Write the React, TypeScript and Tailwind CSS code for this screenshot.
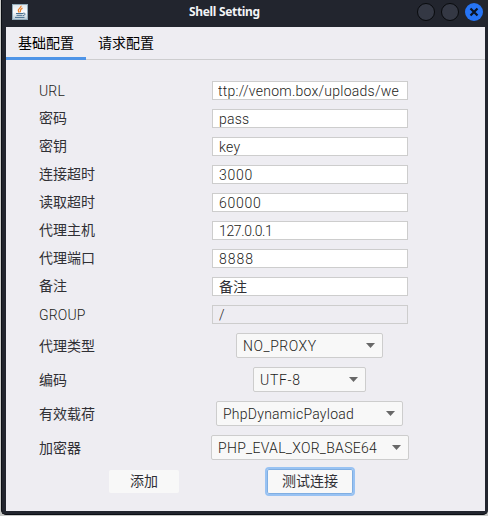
import React from "react";

const fields = [
  { label: "URL", value: "ttp://venom.box/uploads/we", text: "-ml-px -mr-1 tracking-[0.25px]" },
  { label: "密码", value: "pass", text: "tracking-[0.2px]" },
  { label: "密钥", value: "key", text: "tracking-[0.3px]" },
  { label: "连接超时", value: "3000", text: "tracking-[0.75px]" },
  { label: "读取超时", value: "60000", text: "tracking-[0.75px]" },
  { label: "代理主机", value: "127.0.0.1", text: "tracking-[-0.35px]" },
  { label: "代理端口", value: "8888", text: "tracking-[0.95px]" },
  { label: "备注", value: "备注", text: "" },
  { label: "GROUP", value: "/", text: "", disabled: true },
];

const selects = [
  { label: "代理类型", value: "NO_PROXY", box: "w-[147px]", text: "tracking-[0.55px]" },
  { label: "编码", value: "UTF-8", box: "w-[113px]", text: "tracking-[0.7px]" },
  { label: "有效载荷", value: "PhpDynamicPayload", box: "w-[187px]", text: "tracking-[0.25px]" },
  { label: "加密器", value: "PHP_EVAL_XOR_BASE64", box: "w-[198px]", text: "tracking-[0.3px]" },
];

function JavaIcon() {
  return (
    <svg width="16" height="16" viewBox="0 0 16 16" className="block">
      <defs>
        <linearGradient id="tile" x1="0" y1="0" x2="0" y2="1">
          <stop offset="0" stopColor="#dfe7ec" />
          <stop offset="0.5" stopColor="#fafcfd" />
          <stop offset="1" stopColor="#b9cbd6" />
        </linearGradient>
      </defs>
      <rect x="0.5" y="0.5" width="15" height="15" fill="url(#tile)" stroke="#91abba" />
      <path d="M9 1.800C9.800 4 4 5 7.300 8.500M10.500 4.200C7.500 5.500 8.500 6.500 8.300 8.300" fill="none" stroke="#ed832c" strokeWidth="1.300" />
      <path d="M4 9.500h7M4.500 11.300h6M3 13.400h9.500M11 9.300c3-.7 2.500 2 0 2.300" fill="none" stroke="#466f8e" strokeWidth="1" />
    </svg>
  );
}

export default function App() {
  return (
    <div className="h-[516px] w-[488px] overflow-hidden bg-[#c9cac8] pl-px font-['Roboto','Noto_Sans_CJK_SC',sans-serif] text-[14px] text-[#303035]">
      <div className="h-[515px] w-[487px] rounded-b-[5px] border-b border-l border-[#0b0e14] bg-[#22252e] pl-1 pr-[3px]">
        <header className="flex h-[27px] items-center pl-[6px]">
          <div className="-mt-[3px]"><JavaIcon /></div>
          <h1 className="-mt-[3px] flex-1 pl-[161px] font-['Noto_Sans','Open_Sans',sans-serif] text-[12px] font-bold leading-[18px] tracking-[-0.32px] text-[#f3f4f6]">Shell Setting</h1>
          <div className="-mt-[3px] mr-[2px] flex gap-[6px]">
            <span className="size-[18px] rounded-full border border-[#080a0d] bg-[#343844]" />
            <span className="size-[18px] rounded-full border border-[#080a0d] bg-[#343844]" />
            <span className="flex size-[18px] items-center justify-center rounded-full bg-[#2674f5]">
              <svg width="10" height="10" viewBox="0 0 10 10"><path d="M1.500 1.500l7 7m0-7l-7 7" stroke="#0b1526" strokeWidth="2.200" /></svg>
            </span>
          </div>
        </header>
        <main className="h-[484px] bg-[#eeedf2]">
          <nav className="flex h-[33px] border-b border-[#cdcdcf] text-black">
            <div className="h-[33px] w-20 border-b-[3px] border-[#4e94e7] pl-3 leading-[33px]">基础配置</div>
            <div className="w-20 pl-3 leading-[33px]">请求配置</div>
          </nav>
          <form className="pt-4">
            {fields.map((f) => (
              <div key={f.label} className="flex h-7 items-center">
                <label className={`w-[206px] pl-[33px] leading-5 ${f.label === "URL" || f.label === "GROUP" ? "pt-px font-[350] tracking-[0.15px] text-[#1c1c20]" : ""}`}>{f.label}</label>
                <div className={`h-[19px] w-[196px] border border-[#cdcdcd] px-[6px] leading-[18px] ${f.disabled ? "bg-[#eeedf2]" : "bg-white"}`}>
                  <div className={`h-[17px] overflow-hidden whitespace-nowrap ${f.value === "备注" ? "" : "font-[350] text-[#1c1c20]"} ${f.text}`}>{f.value}</div>
                </div>
              </div>
            ))}
            {selects.map((s, i) => (
              <div key={s.label} className="flex h-[34px] items-center">
                <label className="w-[205px] pl-[33px] pt-px leading-5">{s.label}</label>
                <div className={`flex justify-center ${i === 3 ? "w-[198px]" : "w-[197px]"}`}>
                  <div className={`flex h-[25px] items-center justify-between rounded-[2px] border border-[#cdcdcd] bg-[#f8f8f8] pl-[6px] pr-[7px] ${s.box}`}>
                    <span className={`pt-px font-[350] leading-6 text-[#1c1c20] ${s.text}`}>{s.value}</span>
                    <svg width="9" height="5" viewBox="0 0 9 5"><path d="M0 0h9L4.500 5z" fill="#686868" /></svg>
                  </div>
                </div>
              </div>
            ))}
            <div className="flex items-center pl-[103px] pt-[3px]">
              <button type="button" className="h-[23px] w-[70px] rounded-[2px] bg-[#f8f8f8] leading-[23px]">添加</button>
              <button type="button" className="ml-[86px] h-[29px] w-[90px] rounded-[4px] border-2 border-[#98c2f3] bg-[#f8f8f8] leading-[25px] shadow-[inset_0_0_0_1px_#80aee2]">测试连接</button>
            </div>
          </form>
        </main>
      </div>
    </div>
  );
}
